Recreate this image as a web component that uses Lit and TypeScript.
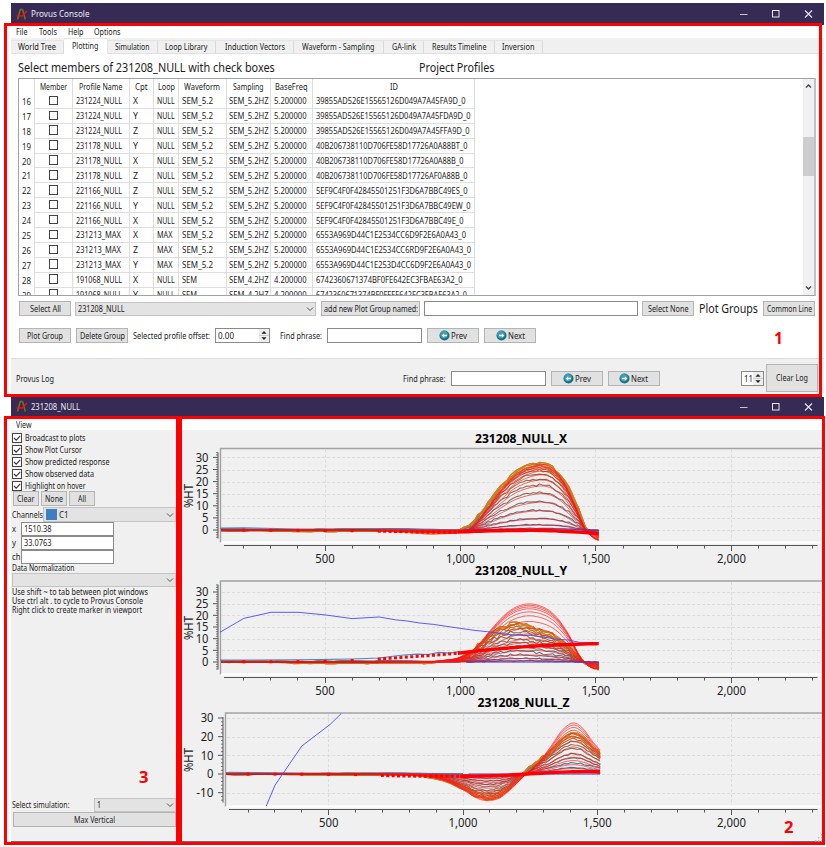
import { LitElement, html, svg, css } from "lit";
import { customElement, property } from "lit/decorators.js";
import { classMap } from "lit/directives/class-map.js";

const FAMILY = '"Noto Sans", "Open Sans", sans-serif';
const ctx = document.createElement("canvas").getContext("2d")!;

/** Text condensed horizontally so that it fills the given width. */
const fit = (text: string, width: number, size = 9, weight = 400) => {
  ctx.font = `${weight} ${size * 10}px ${FAMILY}`;
  const scale = width / (ctx.measureText(text).width / 10);
  return html`<span class="fit" style="width:${width}px;font-size:${size}px;font-weight:${weight}"><span class="ink" style="transform:scaleX(${scale.toFixed(4)})">${text}</span></span>`;
};

const shared = css`
  * { box-sizing: border-box; }
  .fit { white-space: pre; line-height: 12px; height: 12px; display: block; flex: none; }
  .ink { display: block; width: max-content; transform-origin: 0 50%; }
  .btn {
    background: #e1e1e1; border: 1px solid #b4b4b4; display: flex; align-items: center;
    justify-content: center; height: 15px; flex: none; gap: 1px;
  }
  .field { background: #fff; border: 1px solid #8a8a8a; height: 15px; flex: none; display: flex; align-items: center; padding-left: 2px; }
  .combo {
    background: #e3e3e3; border: 1px solid #c3c3c3; height: 14px; flex: none; display: flex;
    align-items: center; padding: 0 1px 0 2px;
  }
  .combo .chev { margin-left: auto; }
  svg { display: block; flex: none; }
`;

const chevron = html`<svg class="chev" width="8" height="6" viewBox="0 0 8 6"><path d="M1 1.5 4 4.5 7 1.5" fill="none" stroke="#555" stroke-width="1"/></svg>`;

const arrowIcon = (dir: "prev" | "next") => html`
  <svg width="11" height="11" viewBox="0 0 11 11">
    <circle cx="5.5" cy="5.5" r="5" fill="#14708a"/>
    <circle cx="5" cy="4.6" r="3.8" fill="#3a9fb2"/>
    <g transform=${dir === "prev" ? "" : "translate(11 0) scale(-1 1)"}>
      <path d="M2.6 5.5 5.2 3.2V4.7H8V6.3H5.2V7.8Z" fill="#fff"/>
    </g>
  </svg>`;

@customElement("title-bar")
class TitleBar extends LitElement {
  @property() label = "";
  @property({ type: Number }) span = 58;
  static styles = [shared, css`
    :host { display: flex; align-items: center; background: #352b55; color: #eeebf2; padding-left: 5px; flex: none; }
    .name { margin-left: 3px; display: flex; }
    .controls { margin-left: auto; }
  `];
  render() {
    return html`
      <svg width="12" height="13" viewBox="0 0 12 13">
        <path d="M1.5 11.5 4 2.2Q5.3.3 6.8 2.2L9.3 11.5" fill="none" stroke="#76701c" stroke-width="1.5"/>
        <path d="M.5 8H6.5L10.8 3" fill="none" stroke="#ee1111" stroke-width="1.7"/>
      </svg>
      <div class="name">${fit(this.label, this.span, 9.5)}</div>
      <svg class="controls" width="91" height="12" viewBox="733 8 91 12">
        <path d="M740 14.5H747.5" stroke="#c8c4d2"/>
        <rect x="772.5" y="10.5" width="6.5" height="6.5" fill="none" stroke="#e8e6ee"/>
        <path d="M805 10.5 812 17.5M812 10.5 805 17.5" stroke="#e8e6ee" stroke-width="1.1"/>
      </svg>`;
  }
}

@customElement("spin-box")
class SpinBox extends LitElement {
  @property() value = "";
  @property({ type: Number }) span = 15;
  static styles = [shared, css`
    :host { display: flex; align-items: center; background: #fff; border: 1px solid #8a8a8a; height: 15px; padding-left: 2px; box-sizing: border-box; flex: none; }
    .arrows { margin-left: auto; background: #eee; width: 10px; height: 13px; }
  `];
  render() {
    return html`${fit(this.value, this.span)}
      <svg class="arrows" width="10" height="13" viewBox="0 0 10 13">
        <path d="M2.4 4.8 5 2 7.6 4.8ZM2.4 8.2 5 11 7.6 8.2Z" fill="#222"/><path d="M0 6.5H10" stroke="#ccc"/>
      </svg>`;
  }
}

type Row = [string, string, string, string, string, string, string, number];
const A = "SEM_5.2", B = "SEM_5.2HZ", F = "5.200000";
const ROWS: Row[] = [
  ["231224_NULL", "X", "NULL", A, B, F, "39855AD526E15565126D049A7A45FA9D_0", 149.5],
  ["231224_NULL", "Y", "NULL", A, B, F, "39855AD526E15565126D049A7A45FDA9D_0", 154.5],
  ["231224_NULL", "Z", "NULL", A, B, F, "39855AD526E15565126D049A7A45FFA9D_0", 153.5],
  ["231178_NULL", "Y", "NULL", A, B, F, "40B206738110D706FE58D17726A0A88BT_0", 151.5],
  ["231178_NULL", "X", "NULL", A, B, F, "40B206738110D706FE58D17726A0A88B_0", 147.5],
  ["231178_NULL", "Z", "NULL", A, B, F, "40B206738110D706FE58D17726AF0A88B_0", 151.5],
  ["221166_NULL", "Z", "NULL", A, B, F, "5EF9C4F0F42845501251F3D6A7BBC49ES_0", 151.5],
  ["221166_NULL", "Y", "NULL", A, B, F, "5EF9C4F0F42845501251F3D6A7BBC49EW_0", 154.5],
  ["221166_NULL", "X", "NULL", A, B, F, "5EF9C4F0F42845501251F3D6A7BBC49E_0", 147.5],
  ["231213_MAX", "X", "MAX", A, B, F, "6553A969D44C1E2534CC6D9F2E6A0A43_0", 150],
  ["231213_MAX", "Z", "MAX", A, B, F, "6553A969D44C1E2534CC6RD9F2E6A0A43_0", 155],
  ["231213_MAX", "Y", "MAX", A, B, F, "6553A969D44C1E253D4CC6D9F2E6A0A43_0", 155],
  ["191068_NULL", "X", "NULL", "SEM", "SEM_4.2HZ", "4.200000", "6742360671374BF0FE642EC3FBAE63A2_0", 146.5],
  ["191068_NULL", "Y", "NULL", "SEM", "SEM_4.2HZ", "4.200000", "6742360671374BF0FEFE642EC3FBAE63A2_0", 151],
];

@customElement("profile-table")
class ProfileTable extends LitElement {
  static styles = [shared, css`
    :host { display: flex; width: 798px; height: 218px; border: 1px solid #a0a0a8; border-right: 2px solid #c0c0c6; overflow: hidden; background: #fff; box-sizing: border-box; }
    .row { display: grid; grid-template-columns: 15.5px 38.5px 57px 24px 25px 47.5px 44.5px 42px 162px; height: 14.9px; }
    .head { height: 15px; }
    .head .cell { justify-content: center; padding: 1px 0 0; border-bottom: 0; }
    .cell { display: flex; align-items: center; padding: 1px 0 0 2.5px; border-right: 1px solid #dedede; border-bottom: 1px solid #dedede; overflow: hidden; }
    .cell.num, .cell.member { justify-content: center; padding-left: 0; }
    .cell.num { border-bottom: 0; }
    .box { width: 9.5px; height: 9.5px; border: 1px solid #444; background: #fff; margin-top: -2px; }
    .bar { margin-left: auto; width: 11px; background: #f0f0f0; display: flex; flex-direction: column; align-items: center; }
    .up { height: 58px; padding-top: 4px; }
    .thumb { width: 11px; height: 39px; background: #cdcdcd; }
    .down { margin-top: auto; padding-bottom: 4px; }
  `];
  render() {
    const heads: [string, number][] = [["", 0], ["Member", 27], ["Profile Name", 43.5], ["Cpt", 12.5], ["Loop", 17], ["Waveform", 36], ["Sampling", 30.5], ["BaseFreq", 32.5], ["ID", 8]];
    return html`
      <div>
        <div class="row head">${heads.map(([h, w]) => html`<div class="cell">${h ? fit(h, w, 8.8) : ""}</div>`)}</div>
        ${ROWS.map((r, i) => html`
          <div class="row">
            <div class="cell num">${fit(String(16 + i), 9, 8.6)}</div>
            <div class="cell member"><span class="box"></span></div>
            <div class="cell">${fit(r[0], r[0].endsWith("X") ? 45 : 46)}</div>
            <div class="cell">${fit(r[1], 5)}</div>
            <div class="cell">${fit(r[2], r[2] === "MAX" ? 15.5 : 17.5)}</div>
            <div class="cell">${fit(r[3], r[3] === "SEM" ? 15 : 31)}</div>
            <div class="cell">${fit(r[4], 39.5)}</div>
            <div class="cell">${fit(r[5], 32.5)}</div>
            <div class="cell">${fit(r[6], r[7])}</div>
          </div>`)}
      </div>
      <div class="bar">
        <svg class="up" width="7" height="58" viewBox="0 0 7 54"><path d="M1 4.5 3.5 2 6 4.5" fill="none" stroke="#444" stroke-width="1.4"/></svg>
        <div class="thumb"></div>
        <svg class="down" width="7" height="10" viewBox="0 0 7 6"><path d="M1 1.5 3.5 4 6 1.5" fill="none" stroke="#444" stroke-width="1.4"/></svg>
      </div>`;
  }
}

/* ---------- plots ---------- */
type Pt = [number, number];
const noise = (n: number) => { const s = Math.sin(n * 127.1 + 11.7) * 43758.5453; return (s - Math.floor(s)) * 2 - 1; };

/** Smooth (Hermite) interpolation through control points. */
const sample = (pts: Pt[], v: number) => {
  if (v <= pts[0][0]) return pts[0][1];
  const last = pts.length - 1;
  if (v >= pts[last][0]) return pts[last][1];
  let i = 0;
  while (v > pts[i + 1][0]) i++;
  const slope = (k: number) => {
    const a = Math.max(0, k - 1), b = Math.min(last, k + 1);
    return (pts[b][1] - pts[a][1]) / (pts[b][0] - pts[a][0]);
  };
  const h = pts[i + 1][0] - pts[i][0], t = (v - pts[i][0]) / h;
  const t2 = t * t, t3 = t2 * t;
  return (2 * t3 - 3 * t2 + 1) * pts[i][1] + (t3 - 2 * t2 + t) * h * slope(i)
    + (-2 * t3 + 3 * t2) * pts[i + 1][1] + (t3 - t2) * h * slope(i + 1);
};

interface Plot {
  title: string; titleX: number; top: number; height: number; left: number; frameTop: number; frameBottom: number;
  zero: number; unit: number; x0: number; dx: number; labels: number[]; minor: number; range: Pt; labelY: number; hT: number;
  predicted: Pt[]; observed: Pt[]; pAmps: number[]; oAmps: number[]; jitter: number; blue: Pt[]; early: Pt[]; thick: Pt[];
}

const PLOTS: Plot[] = [
  {
    title: "231208_NULL_X", titleX: 521, top: 430, height: 136, left: 220, frameTop: 448.5, frameBottom: 542,
    zero: 530, unit: 2.42, x0: 189.6, dx: 0.2709, labels: [30, 25, 20, 15, 10, 5, 0], minor: 1, range: [452.5, 538.5], labelY: 559, hT: 496,
    predicted: [[110, 0], [700, -0.01], [950, -0.045], [1010, -0.03], [1050, 0.07], [1100, 0.33], [1150, 0.61], [1200, 0.83], [1250, 0.95], [1300, 1], [1340, 0.94], [1380, 0.74], [1420, 0.4], [1460, 0.02], [1490, -0.12], [1510, -0.16]],
    observed: [[110, 0], [700, -0.01], [850, -0.04], [950, -0.04], [1000, 0], [1050, 0.15], [1100, 0.4], [1140, 0.62], [1200, 0.86], [1240, 0.96], [1310, 1], [1350, 0.9], [1400, 0.64], [1440, 0.28], [1465, 0.02], [1490, -0.06], [1510, -0.1]],
    pAmps: [0.6, 2, 4.6, 8, 11.5, 15, 18.2, 20.7, 22.8, 24.3, 25.2, 26, 26.6, 27.1],
    oAmps: [0.7, 2.2, 4.8, 8.2, 11.8, 15.4, 18.6, 21, 23, 24.6, 25.6, 26.4, 27.2, 27.8], jitter: 0.35,
    blue: [],
    early: [[112, 0.8], [200, 0.9], [400, 0.4], [700, 0.4], [1000, 0.1]],
    thick: [[110, 0], [600, -0.3], [900, -0.9], [1000, -0.8], [1100, -0.4], [1300, -0.2], [1420, -0.8], [1510, -1.5]],
  },
  {
    title: "231208_NULL_Y", titleX: 521, top: 566, height: 132, left: 220, frameTop: 581, frameBottom: 674,
    zero: 662, unit: 2.333, x0: 189.6, dx: 0.2709, labels: [30, 25, 20, 15, 10, 5, 0], minor: 1, range: [584.5, 669.5], labelY: 691, hT: 628,
    predicted: [[110, 0], [850, 0], [950, 0.03], [1010, 0.1], [1060, 0.27], [1120, 0.6], [1180, 0.88], [1240, 1], [1300, 0.96], [1350, 0.8], [1400, 0.47], [1440, 0.1], [1470, -0.06], [1495, -0.12], [1510, -0.12]],
    observed: [[110, 0.03], [850, -0.02], [950, 0.04], [1010, 0.13], [1060, 0.4], [1110, 0.73], [1160, 0.93], [1220, 1], [1260, 0.91], [1330, 0.74], [1380, 0.52], [1430, 0.2], [1465, -0.03], [1510, -0.14]],
    pAmps: [0.5, 1.5, 3, 5, 6.8, 8.3, 9.8, 12, 14.5, 17.3, 19.7, 21.4, 22.7, 23.5, 24.2, 24.8],
    oAmps: [0.6, 1.6, 3.2, 4.8, 6.6, 8.2, 9.8, 11.4, 12.8, 14, 15, 15.8, 16.4, 16.8], jitter: 0.65,
    blue: [[110, 12.6], [200, 18.7], [300, 21.3], [400, 21.3], [500, 20.2], [600, 18.6], [700, 19.3], [760, 18.1], [800, 17.6], [850, 16.7], [900, 16.1], [1000, 14.4], [1050, 13.6], [1100, 13], [1150, 12.2], [1200, 11.5], [1260, 11.4], [1300, 10.9], [1350, 9.8], [1400, 9.4], [1440, 8.4], [1510, 8.3]],
    early: [[112, 0.8], [400, 0.9], [600, 1.3], [700, 1.7], [780, 2.9], [840, 3.4], [880, 3.2], [920, 4.1], [960, 3.8], [1000, 4.6]],
    thick: [[110, 0.1], [500, 0.2], [600, 0.6], [700, 1.3], [800, 2.1], [900, 2.9], [1000, 3.9], [1100, 5.2], [1200, 6.2], [1300, 7], [1400, 7.5], [1510, 7.9]],
  },
  {
    title: "231208_NULL_Z", titleX: 523.5, top: 698, height: 143, left: 225, frameTop: 713, frameBottom: 806,
    zero: 774, unit: 1.867, x0: 194.4, dx: 0.2686, labels: [30, 20, 10, 0, -10], minor: 2, range: [717, 802.5], labelY: 823, hT: 760,
    predicted: [[110, 0], [800, -0.02], [900, -0.08], [960, -0.19], [1010, -0.34], [1060, -0.49], [1100, -0.52], [1140, -0.46], [1190, -0.24], [1235, 0], [1280, 0.22], [1330, 0.56], [1370, 0.86], [1412, 1], [1450, 0.87], [1480, 0.65], [1510, 0.47]],
    observed: [[110, 0], [800, -0.03], [900, -0.12], [960, -0.24], [1010, -0.4], [1060, -0.56], [1100, -0.6], [1140, -0.52], [1190, -0.24], [1235, 0.1], [1280, 0.33], [1330, 0.6], [1370, 0.86], [1412, 1], [1450, 0.88], [1480, 0.68], [1510, 0.52]],
    pAmps: [1.2, 3, 5, 7.2, 9, 11, 14.5, 17.5, 20, 21.8, 23.5, 25, 26.3, 27.4],
    oAmps: [1.4, 3.5, 6, 8.8, 11, 14, 16, 17.7, 19, 20.5, 21.6, 22.4], jitter: 0.4,
    blue: [[265, -18], [300, -6], [400, 15], [505, 26.5], [547, 32.4]],
    early: [[128, 0.9], [400, 0.5], [700, 0.4], [1000, 0.2]],
    thick: [[110, 0], [600, -0.3], [750, -1], [900, -1.2], [1100, -1], [1230, -0.1], [1350, 0.9], [1450, 1.3], [1510, 1.2]],
  },
];

const OBS_COLORS = ["#3a63b8", "#4b6f93", "#527288", "#5c7380", "#6a7474", "#787366", "#84705a", "#8f6d4c", "#9b6b3d", "#a86d33", "#b4722c", "#bf7826", "#c87e22", "#cd8222"];

@customElement("response-plot")
class ResponsePlot extends LitElement {
  @property({ attribute: false }) plot!: Plot;
  static styles = css`
    :host { display: block; }
    svg { display: block; }
    text { font-family: "Noto Sans", "Open Sans", sans-serif; fill: #222; font-size: 11.7px; }
    .title { font-weight: 700; fill: #000; }
    .grid { stroke: #dcdcdc; stroke-dasharray: 3.2 1.8; }
    .axis { stroke: #555; fill: none; }
    .pred { stroke: #ff1111; stroke-width: .75; fill: none; stroke-opacity: .85; }
    .obs { stroke-width: 1.1; fill: none; }
    .blue { stroke: #4a4aff; stroke-width: .9; fill: none; }
  `;
  render() {
    const p = this.plot;
    const X = (v: number) => p.x0 + v * p.dx;
    const Y = (v: number) => p.zero - v * p.unit;
    const line = (pts: Pt[]) => pts.length ? "M" + pts.map(([a, b]) => `${X(a).toFixed(1)} ${Y(b).toFixed(1)}`).join("L") : "";
    const xs: number[] = [];
    for (let v = (p.left + 1 - p.x0) / p.dx; v < 1510; v += v < 1000 ? 30 : 12) xs.push(v);
    xs.push(1510);
    const obs = p.oAmps.map((a, k) => line(xs.map((v, i) => {
      const calm = v < 1000 ? 0.3 : 1;
      const drift = v < 1000 ? Math.sin(v / 95 + k * 0.5) * 0.25 - (k - 6) * 0.045 : 0;
      return [v, sample(p.observed, v) * a + (noise(i * 1.7) * 0.7 + noise(i * 3.1 + k * 17) * 0.6) * p.jitter * calm * (0.5 + Math.min(a, 12) / 12) + drift] as Pt;
    })));
    const pred = p.pAmps.map((a) => line(xs.map((v) => [v, sample(p.predicted, v) * a] as Pt)));
    const tickXs = Array.from({ length: 23 }, (_, i) => (i + 1) * 100).filter((v) => X(v) > p.left + 4 && X(v) < 817);
    const minorYs: number[] = [];
    for (let v = -20; v < 34; v += p.minor) if (Y(v) >= p.range[0] && Y(v) <= p.range[1]) minorYs.push(v);
    const markers: number[] = [];
    for (let v = 200; v < 700; v += 100) markers.push(v);
    for (let v = 700; v < 1000; v += 20) markers.push(v);
    const axisY = p.frameBottom + 3.5;
    return html`
      <svg width="640" height=${p.height} viewBox="182 ${p.top} 640 ${p.height}">
        <clipPath id="area"><rect x=${p.left} y=${p.frameTop} width="603" height=${p.frameBottom - p.frameTop}/></clipPath>
        <text class="title" x=${p.titleX} y=${p.frameTop - 5.7} text-anchor="middle" textLength="92" lengthAdjust="spacingAndGlyphs">${p.title}</text>
        ${p.labels.map((v) => svg`<path class="grid" d="M${p.left + 2} ${Math.round(Y(v)) + 0.5}H822"/>`)}
        ${[500, 1000, 1500, 2000].map((v) => svg`<path class="grid" d="M${Math.floor(X(v)) + 0.5} ${p.frameTop + 1}V${p.frameBottom - 1}"/>`)}
        <path d="M${p.left} ${p.frameBottom + 0.5}H822" stroke="#fff" stroke-width="2"/>
        <path d="M${p.left + 0.5} ${p.frameBottom + 0.5}V${p.frameTop}H822" fill="none" stroke="#a2a2a2" stroke-width="1.4"/>
        <g clip-path="url(#area)">
          ${obs.map((d, k) => svg`<path class="obs" d=${d} stroke=${OBS_COLORS[Math.min(13, Math.round(k * 13 / (obs.length - 1)))]}/>`)}
          ${obs.slice(-3).map((d) => svg`<path class="obs" d=${d} stroke="#cc7f22" stroke-width="1.6"/>`)}
          <path d=${line(p.early)} stroke="#4787c7" fill="none" stroke-width="1.1"/>
          ${pred.map((d) => svg`<path class="pred" d=${d}/>`)}
          <path d=${line([[xs[0], -0.15], [700, -0.2]])} stroke="#d21b0e" stroke-width="1.5"/>
          <path d=${line([[1020, 0], [1510, 0]])} stroke="#4433cc" stroke-width="1.1"/>
          <path class="blue" d=${line(p.blue)}/>
          ${markers.map((v) => svg`<rect x=${X(v) - 1.5} y=${Y(sample(p.thick, v)) - 1.5} width="3" height="3" fill="#f00"/>`)}
          <path d=${line(Array.from({ length: 27 }, (_, i) => { const v = 990 + i * 20; return [v, sample(p.thick, v)] as Pt; }))} stroke="#f00" stroke-width="3.4" fill="none"/>
        </g>
        <path class="axis" d="M${p.left - 2} ${p.range[0]}V${p.range[1]}"/>
        ${minorYs.map((v) => svg`<path class="axis" d="M${p.left - (p.labels.includes(v) ? 7 : 4)} ${Y(v)}H${p.left - 2}" stroke-width=${p.labels.includes(v) ? 1 : 0.8}/>`)}
        ${p.labels.map((v) => {
          const s = String(v);
          const w = s.length * 6.4 - (v < 0 ? 2 : 0);
          return svg`<text x=${p.left - 11.5 - w} y=${Y(v) + 4.2} textLength=${w} lengthAdjust="spacingAndGlyphs">${s}</text>`;
        })}
        <path class="axis" d="M${p.left + 4} ${axisY}H817.5"/>
        ${tickXs.map((v) => svg`<path class="axis" d="M${Math.floor(X(v)) + 0.5} ${axisY}v${v % 500 ? 3 : 5.5}"/>`)}
        ${([[500, "500", 19.5], [1000, "1,000", 29], [1500, "1,500", 28.5], [2000, "2,000", 29]] as [number, string, number][]).map(([v, s, w]) =>
          svg`<text x=${X(v) - w / 2} y=${p.labelY + 4.3} textLength=${w} lengthAdjust="spacingAndGlyphs">${s}</text>`)}
        <text transform="translate(192.5 ${p.hT}) rotate(-90)" text-anchor="middle" textLength="24" lengthAdjust="spacingAndGlyphs">%HT</text>
      </svg>`;
  }
}

@customElement("app-root")
class AppRoot extends LitElement {
  static styles = [shared, css`
    :host { display: block; position: relative; width: 826px; height: 847px; background: #fff; overflow: hidden; font-family: "Noto Sans", "Open Sans", sans-serif; color: #1c1c1c; line-height: 1; }
    .window { margin-left: 11px; width: 813px; display: flex; flex-direction: column; }
    .console { padding-top: 3px; height: 397px; }
    .console title-bar { height: 22px; }
    .menu { display: flex; align-items: center; height: 13px; padding: 1px 0 0 5px; background: #fff; gap: 11px; flex: none; }
    .tabs { display: grid; grid-template-columns: 53px 44px 50px 58px 78px 90px 40px 71px 47.5px; height: 16px; background: #f0f0f0; border-bottom: 1px solid #e0e0e0; flex: none; }
    .tab { display: flex; align-items: center; justify-content: center; border-right: 1px solid #dadada; border-top: 1px solid #e4e4e4; margin-top: 2px; }
    .tab.on { background: #fff; margin: 0 0 -1px; border-color: #e4e4e4; padding-bottom: 1px; }
    .page { height: 304px; border-right: 2px solid #f0f0f0; padding: 0 0 0 7px; flex: none; }
    .heads { display: flex; height: 24px; align-items: center; gap: 144px; padding-top: 3px; }
    .bar { display: flex; align-items: center; padding-left: 1px; height: 27px; padding-bottom: 1px; }
    .bar1 { height: 26px; padding-bottom: 1px; }
    .bar2 { height: 28px; }
    .log { height: 35px; background: #f0f0f0; border-top: 1px solid #dcdcdc; display: flex; align-items: center; padding: 5px 0 0 5px; flex: none; }
    .w52 { width: 52px; }
    .tall { height: 28px; margin-top: -1px; }
    .ml2 { margin-left: 2px; } .ml4 { margin-left: 4px; } .ml5 { margin-left: 5px; } .ml10 { margin-left: 10px; }
    .push { margin-left: 81px; }
    .pushlog { margin-left: 349px; }
    .w241 { width: 241px; } .w99 { width: 99px; } .w214 { width: 214px; } .w95 { width: 95px; }
    .w55 { width: 55px; } .w23 { width: 23px; }
    .plots { height: 448px; }
    .plots title-bar { height: 19px; }
    .plots .menu { height: 14px; padding-top: 4px; }
    .body { display: flex; height: 412px; background: #f0f0f0; border-bottom: 1px solid #6c6c88; flex: none; }
    .side { width: 171px; display: flex; flex-direction: column; padding: 2px 6px 0 1px; }
    .side > * { flex: none; }
    .check { display: flex; height: 11.9px; align-items: center; gap: 2.5px; }
    .trio { display: flex; gap: 2px; padding: 0 0 1px 1px; }
    .trio .btn { width: 26px; }
    .line { display: flex; align-items: center; }
    .wide { flex: 1; height: 14.5px; }
    .tag { width: 9px; flex: none; }
    .num { width: 93px; height: 14px; }
    .swatch { width: 11px; height: 11px; background: #3f7fc0; margin-right: 2px; }
    .norm { height: 9px; display: flex; align-items: center; }
    .hint { height: 9.3px; display: flex; align-items: center; }
    .side > .bottom { margin-top: auto; padding-bottom: 14px; }
    .bottom .combo { width: 82px; margin-left: auto; }
    .max { margin-left: 1px; }
    .frame { position: absolute; border: 3px solid #f00; }
    .f1 { left: 4px; top: 23px; width: 818px; height: 374px; }
    .f2 { left: 179px; top: 416px; width: 646px; height: 429px; }
    .f3 { left: 4px; top: 416px; width: 175px; height: 429px; }
    .mark { position: absolute; color: #f00; }
    .m1 { left: 774px; top: 332px; } .m2 { left: 784px; top: 821px; } .m3 { left: 139px; top: 771px; }
    .grip { position: absolute; left: 815px; top: 834px; }
  `];

  render() {
    const tabs: [string, number][] = [["World Tree", 38], ["Plotting", 26.5], ["Simulation", 34.5], ["Loop Library", 42.5], ["Induction Vectors", 60], ["Waveform - Sampling", 72.5], ["GA-link", 24], ["Results Timeline", 54.5], ["Inversion", 32.5]];
    const checks: [string, number][] = [["Broadcast to plots", 60.5], ["Show Plot Cursor", 57], ["Show predicted response", 84.5], ["Show observed data", 69], ["Highlight on hover", 60.5]];
    return html`
      <div class="window console">
        <title-bar label="Provus Console" span="58.5"></title-bar>
        <div class="menu">${fit("File", 11.5)}${fit("Tools", 18)}${fit("Help", 15.5)}${fit("Options", 26.5)}</div>
        <div class="tabs">${tabs.map(([n, w]) => html`<div class=${classMap({ tab: true, on: n === "Plotting" })}>${fit(n, w)}</div>`)}</div>
        <div class="page">
          <div class="heads">${fit("Select members of 231208_NULL with check boxes", 257, 12.4)}${fit("Project Profiles", 75.5, 12.4)}</div>
          <profile-table></profile-table>
          <div class="bar bar1">
            <div class="btn w52">${fit("Select All", 31)}</div>
            <div class="combo w241 ml4">${fit("231208_NULL", 46.5)}${chevron}</div>
            <div class="btn w99 ml5">${fit("add new Plot Group named:", 94)}</div>
            <div class="field w214 ml4"></div>
            <div class="btn w52 ml4">${fit("Select None", 40.5)}</div>
            <div class="ml5">${fit("Plot Groups", 59, 12.4)}</div>
            <div class="btn w52 ml5">${fit("Common Line", 45)}</div>
          </div>
          <div class="bar bar2">
            <div class="btn w52">${fit("Plot Group", 36)}</div>
            <div class="btn w52 ml5">${fit("Delete Group", 45)}</div>
            <div class="ml5">${fit("Selected profile offset:", 77)}</div>
            <spin-box class="w55 ml5" value="0.00" span="16"></spin-box>
            <div class="ml10">${fit("Find phrase:", 42)}</div>
            <div class="field w95 ml5"></div>
            <div class="btn w52 ml5">${arrowIcon("prev")}${fit("Prev", 16)}</div>
            <div class="btn w52 ml5">${arrowIcon("next")}${fit("Next", 17)}</div>
          </div>
        </div>
        <div class="log">
          ${fit("Provus Log", 38)}
          <div class="pushlog">${fit("Find phrase:", 42.5)}</div>
          <div class="field w95 ml5"></div>
          <div class="btn w52 ml5">${arrowIcon("prev")}${fit("Prev", 16)}</div>
          <div class="btn w52 ml5">${arrowIcon("next")}${fit("Next", 17)}</div>
          <spin-box class="w23 push" value="11" span="9"></spin-box>
          <div class="btn w52 tall ml2">${fit("Clear Log", 32)}</div>
        </div>
      </div>
      <div class="window plots">
        <title-bar label="231208_NULL" span="49"></title-bar>
        <div class="menu">${fit("View", 15.5)}</div>
        <div class="body">
          <div class="side">
            ${checks.map(([n, w]) => html`
              <div class="check">
                <svg width="10" height="10" viewBox="0 0 10 10"><rect x=".5" y=".5" width="9" height="9" fill="#fff" stroke="#444"/><path d="M2 5 4.2 7.2 8.2 2.8" fill="none" stroke="#333" stroke-width="1.1"/></svg>
                ${fit(n, w)}
              </div>`)}
            <div class="trio">
              <div class="btn">${fit("Clear", 17.5)}</div>
              <div class="btn">${fit("None", 18)}</div>
              <div class="btn">${fit("All", 8)}</div>
            </div>
            <div class="line">${fit("Channels", 31)}<div class="combo wide"><span class="swatch"></span>${fit("C1", 9.5)}${chevron}</div></div>
            <div class="line"><div class="tag">${fit("x", 4)}</div><div class="field num">${fit("1510.38", 27.5)}</div></div>
            <div class="line"><div class="tag">${fit("y", 4)}</div><div class="field num">${fit("33.0763", 27.5)}</div></div>
            <div class="line"><div class="tag">${fit("ch", 8.5)}</div><div class="field num"></div></div>
            <div class="norm">${fit("Data Normalization", 62.5)}</div>
            <div class="combo">${chevron}</div>
            <div class="hint">${fit("Use shift ~ to tab between plot windows", 136)}</div>
            <div class="hint">${fit("Use ctrl alt . to cycle to Provus Console", 131)}</div>
            <div class="hint">${fit("Right click to create marker in viewport", 130)}</div>
            <div class="bottom">
              <div class="line">${fit("Select simulation:", 57.5)}<div class="combo">${fit("1", 4)}${chevron}</div></div>
              <div class="btn max">${fit("Max Vertical", 41)}</div>
            </div>
          </div>
          <div>${PLOTS.map((p) => html`<response-plot .plot=${p}></response-plot>`)}</div>
        </div>
      </div>
      <svg class="grip" width="8" height="8" viewBox="0 0 8 8"><path d="M6 0h1.5v1.5H6ZM3 3h1.5v1.5H3ZM6 3h1.5v1.5H6ZM0 6h1.5v1.5H0ZM3 6h1.5v1.5H3ZM6 6h1.5v1.5H6Z" fill="#bbb"/></svg>
      <div class="frame f1"></div><div class="frame f3"></div><div class="frame f2"></div>
      <div class="mark m1">${fit("1", 9, 16, 700)}</div>
      <div class="mark m2">${fit("2", 9.5, 16, 700)}</div>
      <div class="mark m3">${fit("3", 9.5, 16, 700)}</div>`;
  }
}
